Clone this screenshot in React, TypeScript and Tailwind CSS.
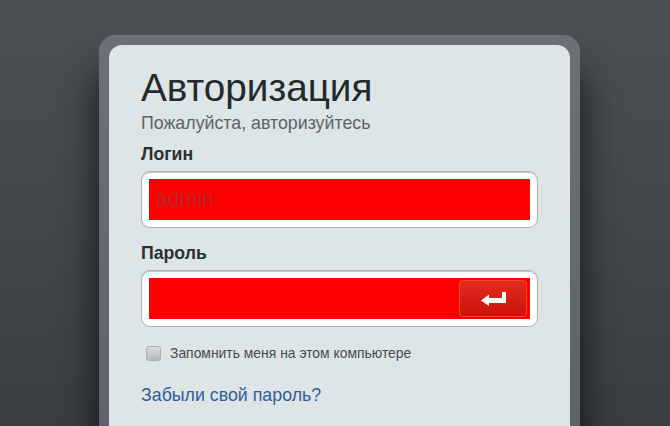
const App = () => {
  return (
    <div className="h-[426px] w-[670px] overflow-hidden bg-[linear-gradient(180deg,#4c5055_0%,#45494d_45%,#3a3e41_100%)] pl-[99px] pt-[35px] font-['Liberation_Sans',sans-serif]">
      <div className="h-[460px] w-[481px] rounded-[16px] bg-[linear-gradient(180deg,#6c7179_0%,#5a6068_100%)] p-[10px] shadow-[0_40px_34px_4px_rgba(15,19,21,0.8)]">
        <div className="h-full rounded-[13px] bg-[#dde5e6] px-8 pt-[20px]">
          <h1 className="text-[38.7px] leading-[46px] text-[#232a2d]">Авторизация</h1>
          <p className="mt-[2px] text-[17.8px] leading-[21px] text-[#5c6467]">Пожалуйста, авторизуйтесь</p>
          <label className="mt-[10px] block text-[17.7px] font-bold leading-[20px] text-[#2a3033]">Логин</label>
          <div className="mt-[7px] h-[57px] w-[397px] rounded-[9px] border border-[#aab3b4] bg-white p-[7px] shadow-[inset_0_1px_1px_rgba(0,0,0,0.25)]">
            <div className="flex h-[41px] items-center bg-[#ff0000] pl-[7px] text-[21.5px] text-[#b3272b]">admin</div>
          </div>
          <label className="mt-[15px] block text-[17.7px] font-bold leading-[20px] text-[#2a3033]">Пароль</label>
          <div className="mt-[7px] h-[57px] w-[397px] rounded-[9px] border border-[#aab3b4] bg-white p-[7px] shadow-[inset_0_1px_1px_rgba(0,0,0,0.25)]">
            <div className="flex h-[41px] items-center justify-end bg-[#ff0000] pr-[3px]">
              <button className="flex h-[37px] w-[68px] items-center justify-center rounded-[4px] border border-[#ee4a1a] bg-[linear-gradient(180deg,#e22a1e_0%,#cc120d_100%)]">
                <svg width="25" height="14" viewBox="0 0 25 14" fill="#ffffff">
                  <path d="M25 0 L25 11 L8 11 L8 14 L0 8.5 L8 2.5 L8 6 L21 6 L21 0 Z" />
                </svg>
              </button>
            </div>
          </div>
          <div className="mt-[17px] flex items-center pl-[5px]">
            <span className="h-[15px] w-[15px] rounded-[3px] border border-[#a9b0b2] bg-[linear-gradient(180deg,#d6dadb_0%,#b4babc_100%)]"></span>
            <span className="ml-[9px] text-[13.9px] leading-[18px] text-[#454c4f]">Запомнить меня на этом компьютере</span>
          </div>
          <a className="mt-[22px] block text-[17.8px] leading-[22px] text-[#2f5e98]">Забыли свой пароль?</a>
        </div>
      </div>
    </div>
  );
};

export default App;
